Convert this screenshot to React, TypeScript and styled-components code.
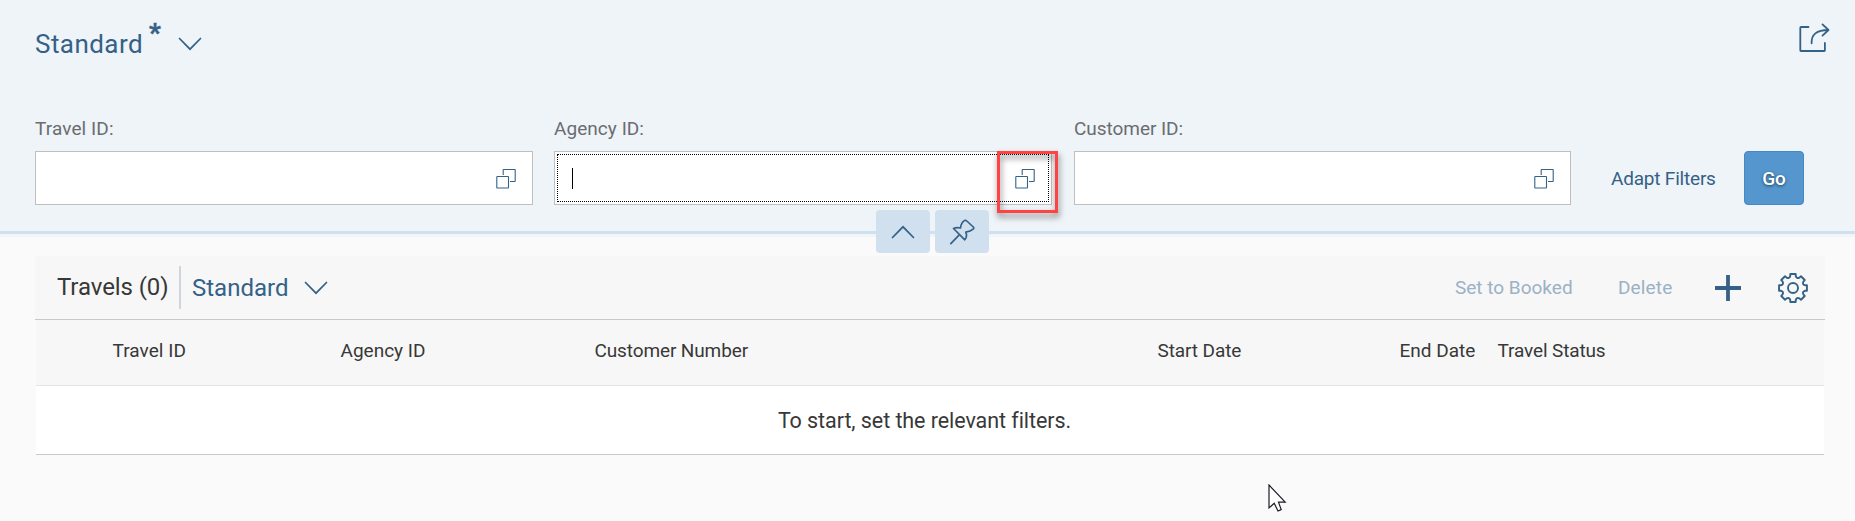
import React from 'react';
import styled, { createGlobalStyle } from 'styled-components';

const BLUE = '#346187';

const Global = createGlobalStyle`
  * { box-sizing: border-box; }
  body { margin: 0; background: #fafafa; font-family: Roboto, "Liberation Sans", sans-serif; color: #383838; overflow: hidden; }
  svg { display: block; flex: none; }
`;

const Page = styled.div`
  position: relative;
  width: 1855px;
  height: 521px;
  overflow: hidden;
`;

const Header = styled.header`
  height: 237px;
  background: #eff4f9;
  border-bottom: 3px solid #f0f5fa;
`;

const HeaderBody = styled.div`
  height: 234px;
  padding: 23px 25px 0 35px;
  background: #eff4f8;
  border-bottom: 3px solid #d1e0ee;
`;

const TitleRow = styled.div`
  display: flex;
  justify-content: space-between;
  align-items: flex-start;
  height: 97px;
`;

const VariantTitle = styled.div`
  display: flex;
  align-items: flex-start;
  color: ${BLUE};
`;

const Label = styled.span<{ $size: number; $spacing?: number; $color?: string }>`
  display: inline-block;
  white-space: nowrap;
  font-size: ${p => p.$size}px;
  line-height: 30px;
  letter-spacing: ${p => p.$spacing ?? 0}px;
  color: ${p => p.$color ?? 'inherit'};
`;

const TitleText = styled.div`
  width: 108px;
  padding-top: 6px;
`;

const Star = styled.span`
  width: 12px;
  margin: -3px 0 0 6px;
  font-size: 26px;
  line-height: 26px;
  font-weight: 700;
  -webkit-text-stroke: 0.5px ${BLUE};
`;

const TitleArrow = styled.div`
  margin: 14px 0 0 17px;
`;

const FilterRow = styled.div`
  display: flex;
  align-items: flex-end;
  height: 85px;
`;

const Field = styled.div<{ $width: number; $gap: number }>`
  width: ${p => p.$width}px;
  margin-right: ${p => p.$gap}px;
  height: 91px;
  display: flex;
  flex-direction: column;
  justify-content: space-between;
`;

const InputBox = styled.div<{ $focused?: boolean }>`
  position: relative;
  display: flex;
  align-items: center;
  justify-content: space-between;
  height: 54px;
  padding: 1px 16px 0 17px;
  border: 1px solid #bfbfbf;
  background: #fff;
  outline: ${p => (p.$focused ? '1px dotted #000' : 'none')};
  outline-offset: -4px;
`;

const Caret = styled.span<{ $on?: boolean }>`
  width: 1px;
  height: 21px;
  background: ${p => (p.$on ? '#000' : 'transparent')};
`;

const Highlight = styled.div`
  position: absolute;
  top: -1px;
  right: -7px;
  width: 61px;
  height: 62px;
  border: 3px solid #ff4343;
  filter: drop-shadow(1px 4px 3px rgba(0, 0, 0, 0.5));
`;

const AdaptLink = styled.div`
  height: 54px;
  display: flex;
  align-items: center;
  width: 105px;
  margin-left: 18px;
  padding-top: 2px;
  color: ${BLUE};
`;

const GoButton = styled.button`
  width: 60px;
  height: 54px;
  margin-left: 28px;
  padding: 1px 0 0;
  border: 1px solid #4189c7;
  border-radius: 4px;
  background: #5496cd;
  color: #fff;
  font: 500 19px/52px Roboto, sans-serif;
  text-shadow: 0 1px 3px rgba(0, 0, 0, 0.6);
`;

const HeaderToggles = styled.div`
  position: absolute;
  left: 876px;
  top: 210px;
  display: flex;
  gap: 5px;
`;

const Toggle = styled.div`
  display: grid;
  place-items: center;
  width: 54px;
  height: 43px;
  border-radius: 4px;
  background: #d1e0ee;
`;

const TableCard = styled.section`
  width: 1790px;
  margin: 19px 0 0 35px;
`;

const Toolbar = styled.div`
  display: flex;
  align-items: center;
  height: 64px;
  padding: 0 16px 0 22px;
  background: #f7f7f7;
  border-bottom: 1px solid #c9c9c9;
`;

const Separator = styled.span`
  width: 2px;
  height: 43px;
  margin: 0 11px 0 0;
  background: #cfd5da;
`;

const Slot = styled.span<{ $w: number; $raise?: number }>`
  display: block;
  flex: none;
  width: ${p => p.$w}px;
  padding-bottom: ${p => p.$raise ?? 0}px;
`;

const Spacer = styled.span`
  flex: 1;
`;

const HeadRow = styled.div`
  display: grid;
  grid-template-columns: 228px 254px 563px 242px 98px 1fr;
  align-items: center;
  height: 66px;
  margin: 0 1px;
  padding: 0 0 4px 76.5px;
  background: #f7f7f7;
  border-bottom: 1px solid #e4e4e4;
`;

const EmptyRow = styled.div`
  display: flex;
  justify-content: center;
  align-items: center;
  height: 69px;
  margin: 0 1px;
  padding: 2px 11px 0 0;
  background: #fff;
  border-bottom: 1px solid #c9c9c9;
`;

const Pointer = styled.svg`
  position: absolute;
  left: 1268px;
  top: 484px;
`;

const Chevron = ({ up }: { up?: boolean }) => (
  <svg width="24" height="14" viewBox="0 0 24 14" fill="none" stroke={BLUE} strokeWidth="1.7" strokeLinecap="round">
    <path d={up ? 'M1.5 12.5 12 1.8 22.5 12.5' : 'M1.5 1.5 12 12.2 22.5 1.5'} />
  </svg>
);

const ValueHelp = () => (
  <svg width="20" height="20" viewBox="0 0 20 20" fill="none" stroke={BLUE} strokeWidth="1.1">
    <rect x="0.8" y="7.5" width="11.7" height="11.5" rx="0.6" />
    <path d="M7.2 6V1.1Q7.2.5 7.8.5H18.6Q19.2.5 19.2 1.1V11.9Q19.2 12.5 18.6 12.5H14" />
  </svg>
);

const Share = () => (
  <svg width="32" height="30" viewBox="0 0 32 30" fill="none" stroke={BLUE} strokeWidth="1.8" strokeLinecap="round" strokeLinejoin="round">
    <path d="M10.5 4H3Q2.3 4 2.3 4.7V27.3Q2.3 28 3 28H26.2Q26.9 28 26.9 27.3V20" />
    <path d="M13.6 20.3C13.2 11.5 18.5 7 30.5 7M24.5 1.4 30.5 7 24.5 12.6" />
  </svg>
);

const Pin = () => (
  <svg width="26" height="26" viewBox="0 0 26 26" fill="none" stroke={BLUE} strokeWidth="1.7" strokeLinecap="round" strokeLinejoin="round">
    <path d="M1.8 24.6 10 16.2" />
    <path d="M4.5 9.5Q7.5 8.2 11.5 9Q12.3 3.2 15.6 1.6Q16.8 1 17.8 2L24.3 8Q25.3 9 24.1 10.2Q21.6 12.3 16.8 13.2Q18.6 17.5 15.8 20.8Z" />
  </svg>
);

const Plus = () => (
  <svg width="28" height="28" viewBox="0 0 28 28" stroke={BLUE} strokeWidth="3.8">
    <path d="M14 1V27M1 14H27" />
  </svg>
);

const gearPath = (() => {
  const at = (angle: number, radius: number) =>
    `${(16 + radius * Math.cos(angle)).toFixed(2)} ${(16 + radius * Math.sin(angle)).toFixed(2)}`;
  const parts: string[] = [];
  for (let i = 0; i < 8; i++) {
    const base = (i * Math.PI) / 4 - Math.PI / 2;
    parts.push(`${i ? 'L' : 'M'}${at(base - 0.19, 14.2)}`);
    parts.push(`L${at(base + 0.19, 14.2)}`);
    parts.push(`L${at(base + 0.23, 12.2)}`);
    parts.push(`Q${at(base + Math.PI / 8, 9.8)} ${at(base + Math.PI / 4 - 0.23, 12.2)}`);
  }
  return `${parts.join('')}Z`;
})();

const Gear = () => (
  <svg width="32" height="32" viewBox="0 0 32 32" fill="none" stroke={BLUE} strokeWidth="1.9" strokeLinejoin="round">
    <path d={gearPath} />
    <circle cx="16" cy="16" r="5" />
  </svg>
);

export default function App() {
  return (
    <Page>
      <Global />
      <Header>
        <HeaderBody>
          <TitleRow>
            <VariantTitle>
              <TitleText><Label $size={26} $spacing={0.45}>Standard</Label></TitleText>
              <Star>*</Star>
              <TitleArrow><Chevron /></TitleArrow>
            </VariantTitle>
            <Share />
          </TitleRow>
          <FilterRow>
            <Field $width={498} $gap={21}>
              <Label $size={19} $spacing={0.1} $color="#6a6d70">Travel ID:</Label>
              <InputBox><Caret /><ValueHelp /></InputBox>
            </Field>
            <Field $width={498} $gap={22}>
              <Label $size={19} $spacing={0.05} $color="#6a6d70">Agency ID:</Label>
              <InputBox $focused><Caret $on /><ValueHelp /><Highlight /></InputBox>
            </Field>
            <Field $width={497} $gap={22}>
              <Label $size={19} $spacing={-0.05} $color="#6a6d70">Customer ID:</Label>
              <InputBox><Caret /><ValueHelp /></InputBox>
            </Field>
            <AdaptLink><Label $size={19} $spacing={-0.2}>Adapt Filters</Label></AdaptLink>
            <GoButton>Go</GoButton>
          </FilterRow>
        </HeaderBody>
      </Header>
      <HeaderToggles>
        <Toggle><Chevron up /></Toggle>
        <Toggle><Pin /></Toggle>
      </HeaderToggles>
      <TableCard>
        <Toolbar>
          <Slot $w={122} $raise={2}><Label $size={24} $spacing={-0.08}>Travels (0)</Label></Slot>
          <Separator />
          <Slot $w={112}><Label $size={24} $color={BLUE}>Standard</Label></Slot>
          <Chevron />
          <Spacer />
          <Slot $w={163}><Label $size={19} $color="#9bb1c5">Set to Booked</Label></Slot>
          <Slot $w={96}><Label $size={19} $spacing={0.15} $color="#9bb1c5">Delete</Label></Slot>
          <Slot $w={63}><Plus /></Slot>
          <Gear />
        </Toolbar>
        <HeadRow>
          <Label $size={19} $spacing={0.05}>Travel ID</Label>
          <Label $size={19}>Agency ID</Label>
          <Label $size={19} $spacing={-0.12}>Customer Number</Label>
          <Label $size={19} $spacing={-0.1}>Start Date</Label>
          <Label $size={19}>End Date</Label>
          <Label $size={19} $spacing={-0.13}>Travel Status</Label>
        </HeadRow>
        <EmptyRow><Label $size={21.5} $spacing={-0.07}>To start, set the relevant filters.</Label></EmptyRow>
      </TableCard>
      <Pointer width="19" height="29" viewBox="0 0 19 29" fill="#fff" stroke="#1c1c28" strokeWidth="1.2">
        <path d="M1 1V24L6.2 19.2 10 27 13.2 25.6 10.5 18.2H17.2Z" />
      </Pointer>
    </Page>
  );
}
